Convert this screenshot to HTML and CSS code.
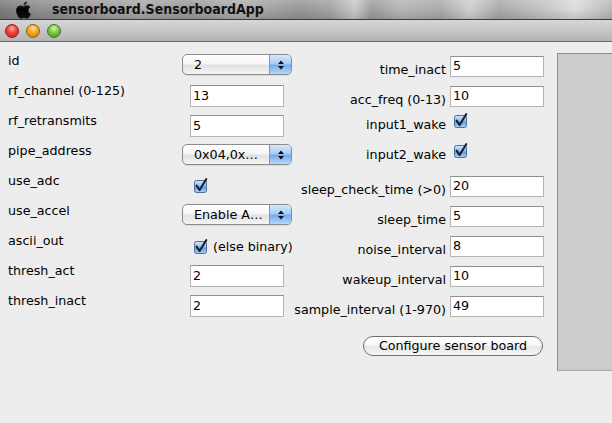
FILE: index.html
```html
<!DOCTYPE html>
<html>
<head>
<meta charset="utf-8">
<link rel="stylesheet" href="styles.css">
</head>
<body>
<div class="menubar">
  <svg class="apple" viewBox="0 0 384 460" width="15" height="18" aria-hidden="true">
    <defs>
      <linearGradient id="ag" x1="0" y1="0" x2="0" y2="1">
        <stop offset="0" stop-color="#3a3a3a"/>
        <stop offset="0.45" stop-color="#000"/>
        <stop offset="1" stop-color="#111"/>
      </linearGradient>
    </defs>
    <path fill="url(#ag)" transform="translate(0,-28)" d="M318.7 268.7c-.2-36.7 16.4-64.4 50-84.8-18.8-26.9-47.2-41.7-84.7-44.6-35.5-2.8-74.3 20.7-88.5 20.7-15 0-49.4-19.7-76.4-19.7C63.3 141.2 4 184.8 4 273.5q0 39.3 14.4 81.2c12.8 36.7 59 126.7 107.2 125.2 25.2-.6 43-17.9 75.8-17.9 31.8 0 48.3 17.9 76.4 17.9 48.6-.7 90.4-82.5 102.6-119.3-65.2-30.7-61.7-90-61.7-91.9zm-56.6-164.2c27.3-32.4 24.8-61.9 24-72.5-24.1 1.4-52 16.4-67.9 34.9-17.5 19.8-27.8 44.3-25.6 71.9 26.1 2 49.9-11.4 69.5-34.3z"/>
  </svg>
  <span class="apptitle">sensorboard.SensorboardApp</span>
</div>
<div class="titlebar">
  <span class="light red"></span>
  <span class="light orange"></span>
  <span class="light green"></span>
</div>
<div class="content">
  <div class="form-left">
    <div class="lbl">id</div>
    <div class="combo"><span class="combo-text">2</span><span class="combo-arrows"><svg viewBox="0 0 8 12" width="8" height="12"><path d="M4 1.5 L7 5 L1 5 Z M4 10.5 L7 7 L1 7 Z" fill="#111"/></svg></span></div>

    <div class="lbl">rf_channel (0-125)</div>
    <div class="field">13</div>

    <div class="lbl">rf_retransmits</div>
    <div class="field">5</div>

    <div class="lbl">pipe_address</div>
    <div class="combo"><span class="combo-text">0x04,0x…</span><span class="combo-arrows"><svg viewBox="0 0 8 12" width="8" height="12"><path d="M4 1.5 L7 5 L1 5 Z M4 10.5 L7 7 L1 7 Z" fill="#111"/></svg></span></div>

    <div class="lbl">use_adc</div>
    <div class="checkwrap"><svg class="check" viewBox="0 0 15 15" width="15" height="15"><use href="#cb"/></svg></div>

    <div class="lbl">use_accel</div>
    <div class="combo"><span class="combo-text">Enable A…</span><span class="combo-arrows"><svg viewBox="0 0 8 12" width="8" height="12"><path d="M4 1.5 L7 5 L1 5 Z M4 10.5 L7 7 L1 7 Z" fill="#111"/></svg></span></div>

    <div class="lbl">ascii_out</div>
    <div class="checkwrap checkwrap-text"><svg class="check" viewBox="0 0 15 15" width="15" height="15"><use href="#cb"/></svg><span class="cbtext">(else binary)</span></div>

    <div class="lbl">thresh_act</div>
    <div class="field">2</div>

    <div class="lbl">thresh_inact</div>
    <div class="field">2</div>
  </div>

  <div class="form-right">
    <div class="rlbl">time_inact</div>
    <div class="rfield">5</div>

    <div class="rlbl">acc_freq (0-13)</div>
    <div class="rfield">10</div>

    <div class="rlbl rlbl-cb">input1_wake</div>
    <div class="rcheck"><svg class="check" viewBox="0 0 15 15" width="15" height="15"><use href="#cb"/></svg></div>

    <div class="rlbl rlbl-cb">input2_wake</div>
    <div class="rcheck"><svg class="check" viewBox="0 0 15 15" width="15" height="15"><use href="#cb"/></svg></div>

    <div class="rlbl">sleep_check_time (&gt;0)</div>
    <div class="rfield">20</div>

    <div class="rlbl">sleep_time</div>
    <div class="rfield">5</div>

    <div class="rlbl">noise_interval</div>
    <div class="rfield">8</div>

    <div class="rlbl">wakeup_interval</div>
    <div class="rfield">10</div>

    <div class="rlbl">sample_interval (1-970)</div>
    <div class="rfield">49</div>

    <div class="button">Configure sensor board</div>
  </div>

  <div class="panel"></div>
</div>

<svg class="defs" width="0" height="0" aria-hidden="true">
  <defs>
    <linearGradient id="cbg" x1="0" y1="0" x2="0" y2="1">
      <stop offset="0" stop-color="#d2e6fb"/>
      <stop offset="0.45" stop-color="#8fbff2"/>
      <stop offset="0.55" stop-color="#5f9fe6"/>
      <stop offset="1" stop-color="#a9d2fb"/>
    </linearGradient>
    <g id="cb">
      <rect x="1.5" y="2.5" width="12" height="12" rx="2" fill="url(#cbg)" stroke="#4f6f9c" stroke-width="1"/>
      <path d="M3.6 7.6 L6.6 12 L13.2 1.2" fill="none" stroke="#1b1f27" stroke-width="2.1" stroke-linecap="round" stroke-linejoin="round"/>
    </g>
  </defs>
</svg>
</body>
</html>
```
FILE: styles.css
```css
html, body {
  margin: 0;
  padding: 0;
}
body {
  width: 612px;
  height: 423px;
  overflow: hidden;
  background: #ededed;
  font-family: "DejaVu Sans", "Noto Sans", sans-serif;
  font-size: 12.7px;
  color: #000;
}

.menubar {
  height: 19px;
  border-bottom: 1px solid #3c3c3c;
  display: flex;
  align-items: center;
  background:
    linear-gradient(180deg, rgba(255,255,255,0.18) 0%, rgba(255,255,255,0) 50%, rgba(0,0,0,0.12) 100%),
    linear-gradient(90deg, #7c7c7c 0px, #8e8e8e 40px, #9a9a9a 90px, #a8a8a8 140px, #9b9b9b 190px, #aeaeae 240px, #979797 300px, #a2a2a2 330px, #c9c9c9 355px, #9d9d9d 372px, #b5b5b5 400px, #aaaaaa 440px, #cfcfcf 470px, #a9a9a9 500px, #c2c2c2 540px, #dcdcdc 575px, #b8b8b8 612px);
}
.apple {
  display: block;
  margin-left: 16px;
}
.apptitle {
  margin-left: 21px;
  font-family: "DejaVu Sans Condensed", "DejaVu Sans", sans-serif;
  font-stretch: condensed;
  font-weight: bold;
  font-size: 14px;
  line-height: 19px;
  color: #111;
}

.titlebar {
  height: 21px;
  border-bottom: 1px solid #6e6e6e;
  background: linear-gradient(180deg, #d6d6d6 0%, #c6c6c6 50%, #b3b3b3 100%);
  display: flex;
  align-items: center;
  gap: 7px;
  padding-left: 5px;
}
.light {
  width: 14px;
  height: 14px;
  border-radius: 50%;
  box-sizing: border-box;
  margin-top: 1px;
}
.red {
  background: radial-gradient(circle at 50% 30%, #ffb0a8 0%, #f2463c 40%, #c11a12 100%);
  border: 1px solid #8c1d16;
}
.orange {
  background: radial-gradient(circle at 50% 30%, #ffe2a0 0%, #f5a623 45%, #c86f06 100%);
  border: 1px solid #98600e;
}
.green {
  background: radial-gradient(circle at 50% 30%, #d7f5a8 0%, #7cc446 45%, #3f8d1c 100%);
  border: 1px solid #3e7a1d;
}

.content {
  display: flex;
  align-items: flex-start;
  height: 381px;
  background: #ededed;
}

.form-left {
  display: grid;
  grid-template-columns: 174px 111px;
  grid-auto-rows: 30px;
  padding: 4px 0 0 8px;
}
.lbl {
  padding-top: 7px;
  line-height: 16px;
  white-space: nowrap;
}
.combo {
  margin-top: 8px;
  width: 110px;
  height: 21px;
  box-sizing: border-box;
  border: 1px solid #8c8c8c;
  border-radius: 5px;
  display: flex;
  overflow: hidden;
  background: linear-gradient(180deg, #ffffff 0%, #f6f6f6 45%, #e2e2e2 55%, #f4f4f4 100%);
  box-shadow: 0 1px 0 rgba(0,0,0,0.08);
}
.combo-text {
  flex: 1;
  padding-left: 11px;
  line-height: 20px;
  white-space: nowrap;
}
.combo-arrows {
  width: 21px;
  border-left: 1px solid #7c95b8;
  display: flex;
  align-items: center;
  justify-content: center;
  background: linear-gradient(180deg, #d6e8fb 0%, #a8cdf5 45%, #76acec 55%, #b4d8fb 100%);
}
.combo-arrows svg {
  display: block;
}
.field {
  margin-top: 9px;
  margin-left: 8px;
  width: 94px;
  height: 22px;
  box-sizing: border-box;
  background: #fff;
  border: 1px solid #b4b4b4;
  border-top-color: #8f8f8f;
  padding: 0 2px;
  line-height: 20px;
}
.checkwrap {
  margin-top: 9px;
  margin-left: 11px;
  display: flex;
  align-items: center;
}
.checkwrap-text {
  margin-top: 11px;
}
.check {
  display: block;
}
.cbtext {
  margin-left: 5px;
  line-height: 16px;
  white-space: nowrap;
}

.form-right {
  display: grid;
  grid-template-columns: 153px 94px;
  column-gap: 4px;
  grid-auto-rows: 30px;
  padding-top: 10px;
}
.rlbl {
  text-align: right;
  padding-top: 10px;
  line-height: 16px;
  white-space: nowrap;
}
.rlbl-cb {
  padding-top: 5px;
}
.rfield {
  margin-top: 4px;
  width: 94px;
  height: 21px;
  box-sizing: border-box;
  background: #fff;
  border: 1px solid #b4b4b4;
  border-top-color: #8f8f8f;
  padding: 0 2px 2px;
  line-height: 17px;
}
.rcheck {
  margin-top: 1px;
  margin-left: 3px;
}
.button {
  grid-column: 1 / 3;
  justify-self: end;
  margin-top: 14px;
  margin-right: 1px;
  width: 180px;
  height: 20px;
  box-sizing: border-box;
  border: 1px solid #6f6f6f;
  border-radius: 10px;
  background: linear-gradient(180deg, #ffffff 0%, #f7f7f7 45%, #e6e6e6 55%, #f7f7f7 100%);
  text-align: center;
  line-height: 18px;
  white-space: nowrap;
}

.panel {
  flex: 1;
  margin-left: 13px;
  margin-top: 11px;
  height: 318px;
  box-sizing: border-box;
  background: #cccccc;
  border: 1px solid #8e8e8e;
  border-right: none;
  border-bottom-color: #a8a8a8;
}

.defs {
  position: absolute;
  width: 0;
  height: 0;
  overflow: hidden;
}
```
